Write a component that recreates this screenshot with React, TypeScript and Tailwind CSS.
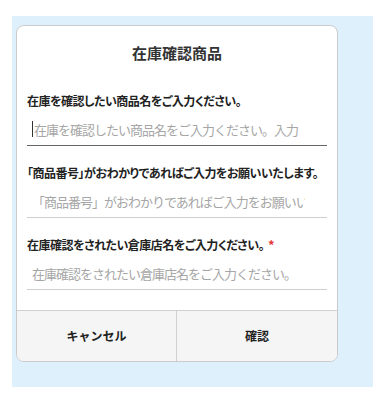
import React from "react";

const font = "font-['Noto_Sans_CJK_JP','Noto_Sans',sans-serif]";

function Field({
  label,
  placeholder,
  required,
  focused,
}: {
  label: string;
  placeholder: string;
  required?: boolean;
  focused?: boolean;
}) {
  return (
    <div className="flex flex-col">
      <div className="h-[18px] flex items-center text-[12px] font-bold text-[#222] leading-[18px] whitespace-nowrap tracking-[-0.5px] [font-feature-settings:'palt']">
        {label}
        {required && <span className="ml-[4px] text-[#e53935] text-[13px]">*</span>}
      </div>
      <div
        className={`mt-[3px] h-[33px] flex items-center border-b ${
          focused ? "border-[#666]" : "border-[#cfcfcf]"
        }`}
      >
        {focused && <span className="ml-[5px] w-px h-[16px] bg-[#333] shrink-0" />}
        <input
          className={`w-full h-full bg-transparent outline-none text-[13px] tracking-[-1px] text-[#333] placeholder:text-[#a6a6a6] pr-[22px] ${
            focused ? "pl-[1px]" : "pl-[5px]"
          } ${font}`}
          placeholder={placeholder}
          readOnly
        />
      </div>
    </div>
  );
}

export default function App() {
  return (
    <div className={`w-[384px] h-[398px] bg-white ${font}`}>
      <div className="ml-[12px] pt-[16px]">
        <div className="w-[361px] h-[371px] bg-[#dff0fd] pl-[4px] pt-[9px]">
          <div className="w-[322px] bg-white border border-[#cbcbcb] rounded-[8px] overflow-hidden flex flex-col">
            <div className="pt-[17px] h-[20px] box-content text-center text-[15px] font-bold text-[#333] leading-[20px]">
              在庫確認商品
            </div>
            <div className="px-[10px] pt-[29px] flex flex-col gap-[18px]">
              <Field
                label="在庫を確認したい商品名をご入力ください。"
                placeholder="在庫を確認したい商品名をご入力ください。入力"
                focused
              />
              <Field
                label="「商品番号」がおわかりであればご入力をお願いいたします。"
                placeholder="「商品番号」がおわかりであればご入力をお願いいたします。"
              />
              <Field
                label="在庫確認をされたい倉庫店名をご入力ください。"
                placeholder="在庫確認をされたい倉庫店名をご入力ください。"
                required
              />
            </div>
            <div className="mt-[20px] grid grid-cols-2 border-t border-[#d0d0d0] bg-[#f5f5f5] h-[51px]">
              <button className="flex items-center justify-center text-[12px] font-bold text-[#222] border-r border-[#d0d0d0]">
                キャンセル
              </button>
              <button className="flex items-center justify-center text-[12px] font-bold text-[#222]">
                確認
              </button>
            </div>
          </div>
        </div>
      </div>
    </div>
  );
}
